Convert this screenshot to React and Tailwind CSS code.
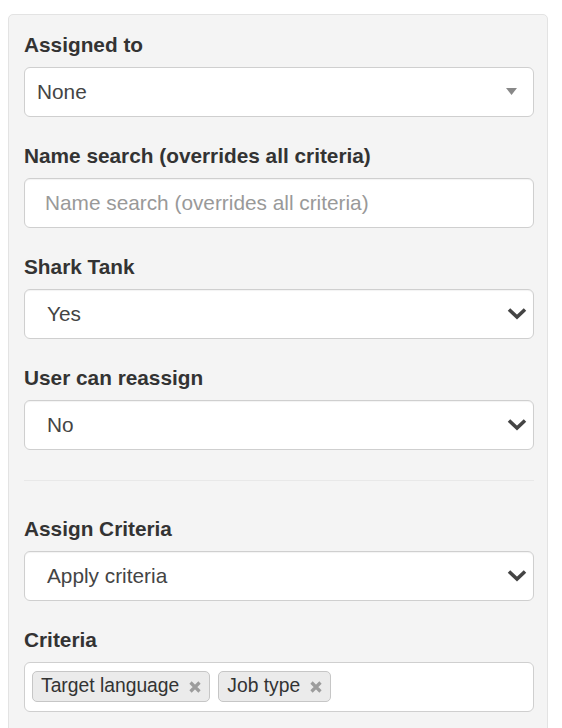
import React from 'react'

const font = { fontFamily: '"Liberation Sans", Arial, Helvetica, sans-serif' }

function Label({ children }) {
  return (
    <div className="text-[20.8px] font-bold text-[#333] leading-[29px] mb-[7.5px]">
      {children}
    </div>
  )
}

function Chevron() {
  return (
    <svg width="20" height="13" viewBox="0 0 20 13" className="shrink-0">
      <path d="M2 2.5 L10 10 L18 2.5" fill="none" stroke="#444" strokeWidth="3.6" />
    </svg>
  )
}

function NativeSelect({ value }) {
  return (
    <div className="h-[50px] bg-white border border-[#cfcfcf] rounded-[6px] flex items-center justify-between pl-[22px] pr-[6px] text-[20.8px] text-[#444] shadow-[inset_0_1px_1px_rgba(0,0,0,0.05)]">
      <span>{value}</span>
      <Chevron />
    </div>
  )
}

function Tag({ text }) {
  return (
    <div className="h-[31px] flex items-center gap-[10px] bg-[#ebebeb] border border-[#c6c6c6] rounded-[5px] pl-[8px] pr-[8px] text-[19.3px] text-[#333]">
      <span>{text}</span>
      <svg width="12" height="12" viewBox="0 0 12 12">
        <path d="M1.5 1.5 L10.5 10.5 M10.5 1.5 L1.5 10.5" stroke="#9c9c9c" strokeWidth="3.2" />
      </svg>
    </div>
  )
}

export default function App() {
  return (
    <div className="min-h-screen bg-white pt-[14px] pl-[8px]" style={font}>
      <div className="w-[540px] bg-[#f4f4f4] border border-[#e3e3e3] rounded-[5px] pl-[15px] pr-[13px] pt-[15px] pb-[30px]">
        <Label>Assigned to</Label>
        <div className="h-[50px] bg-white border border-[#cfcfcf] rounded-[6px] flex items-center justify-between pl-[12px] pr-[16px] text-[20.8px] text-[#444]">
          <span>None</span>
          <svg width="11" height="7" viewBox="0 0 11 7">
            <path d="M0 0 H11 L5.5 7 Z" fill="#888" />
          </svg>
        </div>

        <div className="mt-[24.5px]">
          <Label>Name search (overrides all criteria)</Label>
          <div className="h-[50px] bg-white border border-[#cfcfcf] rounded-[6px] flex items-center pl-[20px] text-[20.8px] text-[#999] shadow-[inset_0_1px_1px_rgba(0,0,0,0.05)]">
            Name search (overrides all criteria)
          </div>
        </div>

        <div className="mt-[24.5px]">
          <Label>Shark Tank</Label>
          <NativeSelect value="Yes" />
        </div>

        <div className="mt-[24.5px]">
          <Label>User can reassign</Label>
          <NativeSelect value="No" />
        </div>

        <div className="mt-[30px] border-t border-[#e8e8e8]" />

        <div className="mt-[33.5px]">
          <Label>Assign Criteria</Label>
          <NativeSelect value="Apply criteria" />
        </div>

        <div className="mt-[24.5px]">
          <Label>Criteria</Label>
          <div className="h-[50px] bg-white border border-[#cfcfcf] rounded-[6px] flex items-center gap-[8px] pl-[7px]">
            <Tag text="Target language" />
            <Tag text="Job type" />
          </div>
        </div>
      </div>
    </div>
  )
}
